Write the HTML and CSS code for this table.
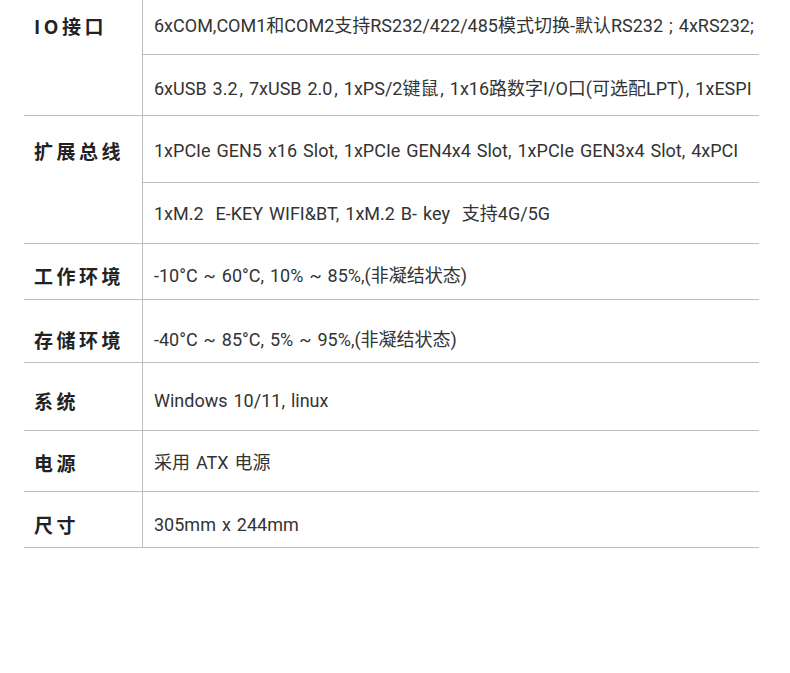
FILE: index.html
```html
<!DOCTYPE html>
<html lang="zh-CN">
<head>
<meta charset="utf-8">
<title>规格参数</title>
<link rel="stylesheet" href="styles.css">
</head>
<body>
<div class="spec">
  <div class="group">
    <div class="label p14">IO接口</div>
    <div class="vals">
      <div class="val h1a">6xCOM,COM1和COM2支持RS232/422/485模式切换-默认RS232 ; 4xRS232;</div>
      <div class="val h1b">6xUSB 3.2&#8202;, 7xUSB 2.0&#8202;, 1xPS/2键鼠&#8202;, 1x16路数字I/O口(可选配LPT)&#8202;, 1xESPI</div>
    </div>
  </div>
  <div class="group">
    <div class="label p23">扩展总线</div>
    <div class="vals">
      <div class="val h2a">1xPCIe GEN5 x16 Slot, 1xPCIe GEN4x4 Slot, 1xPCIe GEN3x4 Slot, 4xPCI</div>
      <div class="val h2b">1xM.2  E-KEY WIFI&amp;BT, 1xM.2 B- key  支持4G/5G</div>
    </div>
  </div>
  <div class="group">
    <div class="label p19">工作环境</div>
    <div class="vals">
      <div class="val h3">-10°C ~ 60°C, 10% ~ 85%,(非凝结状态)</div>
    </div>
  </div>
  <div class="group">
    <div class="label p27">存储环境</div>
    <div class="vals">
      <div class="val h4">-40°C ~ 85°C, 5% ~ 95%,(非凝结状态)</div>
    </div>
  </div>
  <div class="group">
    <div class="label p26">系统</div>
    <div class="vals">
      <div class="val h5">Windows 10/11, linux</div>
    </div>
  </div>
  <div class="group">
    <div class="label p20">电源</div>
    <div class="vals">
      <div class="val h6">采用 ATX 电源</div>
    </div>
  </div>
  <div class="group">
    <div class="label p21">尺寸</div>
    <div class="vals">
      <div class="val h7">305mm x 244mm</div>
    </div>
  </div>
</div>
</body>
</html>
```
FILE: styles.css
```css
* { box-sizing: border-box; }
html, body { margin: 0; padding: 0; background: #fff; }
body {
  font-family: "Roboto", "Noto Sans CJK SC", sans-serif;
  color: #333;
}
.spec {
  margin-left: 24px;
  width: 735px;
}
.group {
  display: grid;
  grid-template-columns: 119px minmax(0, 1fr);
  border-bottom: 1px solid #bdbdbd;
}
.label {
  border-right: 1px solid #bdbdbd;
  padding-left: 10px;
  font-family: "Noto Sans CJK SC", sans-serif;
  font-size: 19px;
  line-height: 24px;
  font-weight: 700;
  letter-spacing: 3.5px;
  color: #222;
}
.vals { display: flex; flex-direction: column; }
.val {
  padding-left: 11px;
  font-size: 18px;
  line-height: 24px;
  word-spacing: 1.5px;
  white-space: pre;
  color: #333;
}
.val + .val { border-top: 1px solid #bdbdbd; }
.h1a { height: 54px; padding-top: 14px; }
.h1b { height: 61px; padding-top: 22px; }
.h2a { height: 66px; padding-top: 23px; }
.h2b { height: 61px; padding-top: 19px; }
.h3 { height: 55px; padding-top: 20px; }
.h4 { height: 62px; padding-top: 28px; }
.h5 { height: 67px; padding-top: 26px; }
.h6 { height: 60px; padding-top: 20px; }
.h7 { height: 55px; padding-top: 21px; }
.p14 { padding-top: 14px; }
.p23 { padding-top: 23px; }
.p19 { padding-top: 20px; }
.p27 { padding-top: 28px; }
.p26 { padding-top: 26px; }
.p20 { padding-top: 20px; }
.p21 { padding-top: 21px; }
```
